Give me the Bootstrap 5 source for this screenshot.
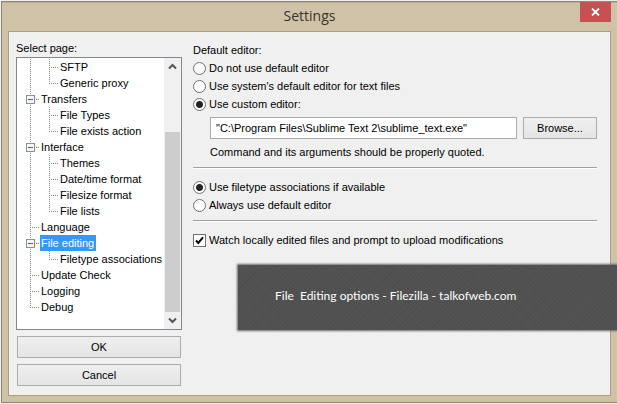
<!DOCTYPE html>
<html lang="en">
<head>
<meta charset="utf-8">
<meta name="viewport" content="width=device-width, initial-scale=1">
<title>Settings</title>
<link href="https://cdn.jsdelivr.net/npm/bootstrap@5.3.0/dist/css/bootstrap.min.css" rel="stylesheet">
<style>
  body { font: 11px/18px "Liberation Sans", sans-serif; color: #000; background: #eef0ea; }
  .win { border: 1px solid #8c8778; border-right: 0; background: #cfc2a7; margin: 0; padding: 0 6px 6px; box-shadow: inset 0 1px #b7ad97; }
  .page { min-height: 100vh; padding: 1px 0 1px 1px; }
  .titlebar { height: 29px; }
  .titlebar h1 { font: 14px/28px "Open Sans", sans-serif; color: #38342c; }
  .close-btn { width: 31px; height: 20px; background: #c75050; border: 0; }
  .side-gap { width: 31px; }
  .pane { background: #f0f0f0; border: 1px solid #aa9f86; padding: 0 13px 9px 7px; }
  .side { width: 166px; padding-top: 7px; }
  .tree { border: 1px solid #828790; background: #fff; height: 273px; }
  .tree ul { padding: 1px 0 0 4px; }
  .tree li { height: 16px; line-height: 16px; white-space: nowrap; }
  .tree a { color: #000; text-decoration: none; padding: 0 2px 0 1px; margin-right: -20px; }
  .tree a.on { background: #39f; color: #fff; margin-right: 0; }
  .ln { width: 19px; flex: none; background-repeat: no-repeat;
    --v: repeating-linear-gradient(#8a8a8a 0 1px, #fff 1px 2px);
    --h: repeating-linear-gradient(90deg, #8a8a8a 0 1px, #fff 1px 2px); }
  .ln.v { background-image: var(--v); background-position: 9px 0; background-size: 1px 16px; }
  .ln.t { background-image: var(--v), var(--h); background-position: 9px 0, 9px 8px; background-size: 1px 16px, 9px 1px; }
  .ln.e { background-image: var(--v), var(--h); background-position: 9px 0, 9px 8px; background-size: 1px 9px, 9px 1px; }
  .tog { width: 9px; height: 9px; padding: 0; border: 1px solid #8e8f8f; background: #f6f6f6; margin: 4px 0 0 5px; display: flex; align-items: center; justify-content: center; }
  .tog::after { content: ""; width: 5px; height: 1px; background: #4560a5; }
  .sbar { width: 17px; background: #f0f0f0; padding: 0 1px; }
  .sbar button { height: 17px; border: 0; padding: 0; background: none; line-height: 0; }
  .above { flex: 57 1 0; }
  .thumb { flex: 180 1 0; background: #cdcdcd; }
  .dlg-btn { height: 22px; line-height: 18px; padding: 0; border: 1px solid #acacac; background: linear-gradient(#efefef, #e4e4e4); color: #000; }
  .side .dlg-btn { margin: 6px 1px 0; }
  .opts { padding: 9px 0 0 11px; min-width: 0; }
  .opt { height: 18px; gap: 3px; }
  .opt input { appearance: none; width: 13px; height: 13px; border: 1px solid #707070; background: #fff; margin: 0; flex: none; }
  .opt input[type=radio] { border-radius: 50%; }
  .opt input[type=radio]:checked { background: radial-gradient(circle, #222 0 3px, #fff 4px); }
  .opt input[type=checkbox]:checked { background: #fff url("data:image/svg+xml,%3Csvg xmlns='http://www.w3.org/2000/svg' viewBox='0 0 11 11'%3E%3Cpath d='M2 5.5 4.3 8 9 2.3' fill='none' stroke='%23000' stroke-width='2'/%3E%3C/svg%3E"); }
  .indent { padding-left: 17px; }
  .cmd { height: 22px; border: 1px solid #ababab; padding: 0 5px; min-width: 0; color: #000; background: #fff; }
  .gap-cmd { gap: 6px; }
  .browse { width: 74px; }
  .rule { border: 0; border-top: 1px solid #a0a0a0; opacity: 1; box-shadow: 0 1px #fff; margin: 6px 0 10px; color: #000; }
  .caption-bar { left: 238px; right: 0; top: 265px; height: 65px; padding-left: 37px; color: #fff; font: 12px/62px Lato, sans-serif; white-space: pre;
    background: repeating-linear-gradient(45deg, #ffffff06 0 1px, #0000 1px 3px), repeating-linear-gradient(-45deg, #00000006 0 1px, #0000 1px 4px), #505050; box-shadow: 0 0 2px 1px #666; }
</style>
</head>
<body>
<div class="page position-relative overflow-hidden d-flex flex-column">
<main class="win d-flex flex-column flex-grow-1">
  <header class="titlebar d-flex justify-content-between">
    <span class="side-gap"></span>
    <h1 class="m-0">Settings</h1>
    <button class="close-btn d-flex align-items-center justify-content-center p-0" aria-label="Close">
      <svg width="9" height="8" viewBox="0 0 9 8"><path d="M1 .5 8 7.5M8 .5 1 7.5" stroke="#fff" stroke-width="1.8"/></svg>
    </button>
  </header>
  <div class="pane d-flex flex-grow-1">
    <nav class="side d-flex flex-column flex-shrink-0" aria-label="Select page">
      <span>Select page:</span>
      <div class="tree d-flex">
        <ul class="list-unstyled flex-grow-1 m-0">
          <li class="d-flex"><span class="ln v"></span><span class="ln t"></span><a href="#">SFTP</a></li>
          <li class="d-flex"><span class="ln v"></span><span class="ln e"></span><a href="#">Generic proxy</a></li>
          <li class="d-flex"><span class="ln t"><button class="tog" aria-label="Collapse Transfers"></button></span><a href="#">Transfers</a></li>
          <li class="d-flex"><span class="ln v"></span><span class="ln t"></span><a href="#">File Types</a></li>
          <li class="d-flex"><span class="ln v"></span><span class="ln e"></span><a href="#">File exists action</a></li>
          <li class="d-flex"><span class="ln t"><button class="tog" aria-label="Collapse Interface"></button></span><a href="#">Interface</a></li>
          <li class="d-flex"><span class="ln v"></span><span class="ln t"></span><a href="#">Themes</a></li>
          <li class="d-flex"><span class="ln v"></span><span class="ln t"></span><a href="#">Date/time format</a></li>
          <li class="d-flex"><span class="ln v"></span><span class="ln t"></span><a href="#">Filesize format</a></li>
          <li class="d-flex"><span class="ln v"></span><span class="ln e"></span><a href="#">File lists</a></li>
          <li class="d-flex"><span class="ln t"></span><a href="#">Language</a></li>
          <li class="d-flex"><span class="ln t"><button class="tog" aria-label="Collapse File editing"></button></span><a class="on" href="#" aria-current="page">File editing</a></li>
          <li class="d-flex"><span class="ln v"></span><span class="ln e"></span><a href="#">Filetype associations</a></li>
          <li class="d-flex"><span class="ln t"></span><a href="#">Update Check</a></li>
          <li class="d-flex"><span class="ln t"></span><a href="#">Logging</a></li>
          <li class="d-flex"><span class="ln e"></span><a href="#">Debug</a></li>
        </ul>
        <div class="sbar d-flex flex-column flex-shrink-0">
          <button aria-label="Scroll up"><svg width="9" height="7" viewBox="0 0 9 7"><path d="M1 5.5 4.5 2 8 5.5" fill="none" stroke="#555" stroke-width="2"/></svg></button>
          <span class="above"></span>
          <span class="thumb"></span>
          <button aria-label="Scroll down"><svg width="9" height="7" viewBox="0 0 9 7"><path d="M1 1.5 4.5 5 8 1.5" fill="none" stroke="#555" stroke-width="2"/></svg></button>
        </div>
      </div>
      <button class="dlg-btn">OK</button>
      <button class="dlg-btn">Cancel</button>
    </nav>
    <form class="opts flex-grow-1">
      <div>Default editor:</div>
      <div class="opt d-flex align-items-center"><input type="radio" name="editor" id="e1"><label for="e1">Do not use default editor</label></div>
      <div class="opt d-flex align-items-center"><input type="radio" name="editor" id="e2"><label for="e2">Use system's default editor for text files</label></div>
      <div class="opt d-flex align-items-center"><input type="radio" name="editor" id="e3" checked><label for="e3">Use custom editor:</label></div>
      <div class="indent gap-cmd d-flex pt-1">
        <input class="cmd flex-grow-1" type="text" aria-label="Custom editor command" value="&quot;C:\Program Files\Sublime Text 2\sublime_text.exe&quot;">
        <button type="button" class="dlg-btn browse flex-shrink-0">Browse...</button>
      </div>
      <div class="indent mt-1">Command and its arguments should be properly quoted.</div>
      <hr class="rule">
      <div class="opt d-flex align-items-center"><input type="radio" name="assoc" id="a1" checked><label for="a1">Use filetype associations if available</label></div>
      <div class="opt d-flex align-items-center"><input type="radio" name="assoc" id="a2"><label for="a2">Always use default editor</label></div>
      <hr class="rule">
      <div class="opt d-flex align-items-center"><input type="checkbox" id="w" checked><label for="w">Watch locally edited files and prompt to upload modifications</label></div>
    </form>
  </div>
</main>
<div class="caption-bar position-absolute">File  Editing options - Filezilla - talkofweb.com</div>
</div>
<script src="https://cdn.jsdelivr.net/npm/bootstrap@5.3.0/dist/js/bootstrap.bundle.min.js"></script>
</body>
</html>
